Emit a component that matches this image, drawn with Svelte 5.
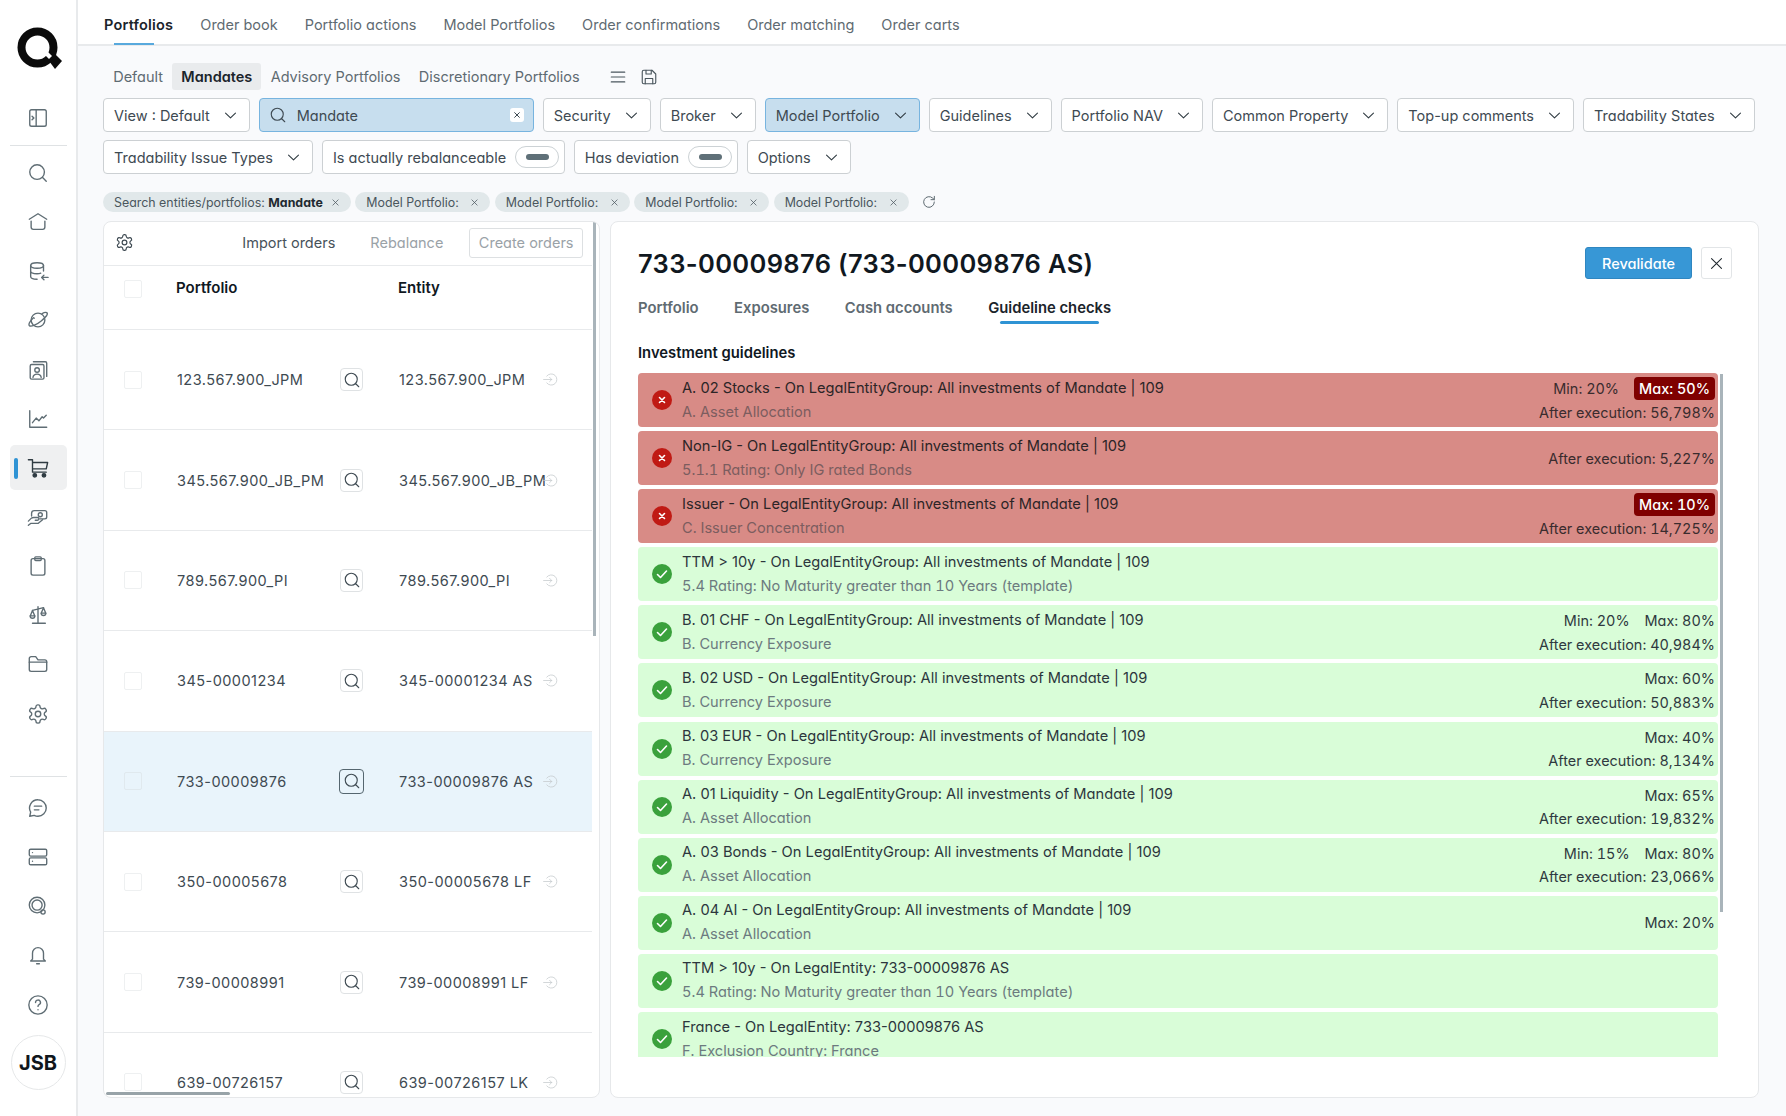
<script>
const I = {
  panel: '<rect x="3" y="3" width="18" height="18" rx="2"/><path d="M10 3v18M5.5 10l2 2-2 2"/>',
  search: '<circle cx="11" cy="11" r="8"/><path d="M17 17l4 4"/>',
  home: '<path d="M2.5 9L12 3l9.5 6"/><path d="M4.5 11v6.5a2.5 2.5 0 0 0 2.5 2.5h10a2.5 2.5 0 0 0 2.5-2.5V11"/>',
  db: '<ellipse cx="11" cy="6" rx="7" ry="3"/><path d="M4 6v12c0 1.7 3 3 7 3M18 6v6M4 12c0 1.7 3 3 7 3 1.5 0 3-.2 4-.6M23 19h-7M18.500 16.500L16 19l2.500 2.500"/>',
  planet: '<circle cx="12" cy="12" r="7.500"/><path d="M7 9.500C3.500 13 1.500 16.500 2.500 18c1.500 2 7.500-.5 13-5S23.500 5.500 21.500 4c-1-.7-3-.2-5 1"/><path d="M8 10h.01"/>',
  contacts: '<rect x="3.500" y="6" width="15" height="16" rx="1.500"/><path d="M7 3h13a1.500 1.500 0 0 1 1.500 1.500V19"/><circle cx="11" cy="12" r="2.500"/><path d="M6.500 20c.5-2.500 2.300-3.500 4.500-3.500s4 1 4.500 3.500"/>',
  chart: '<path d="M3 3v18h18.500M6 16l4-5 3 3 3.500-4.500 1.500 1.500 3-3"/>',
  cart: '<path d="M1.500 3h4.500v13.500h15M6 6h16.500l-1.500 7H6"/><circle cx="8.500" cy="20" r="1.900" fill="currentColor"/><circle cx="18.500" cy="20" r="1.900" fill="currentColor"/>',
  hand: '<path d="M5 11V8a3 3 0 0 1 3-3h11.500a2 2 0 0 1 2 2v5a2 2 0 0 1-2 2H14"/><circle cx="14.500" cy="9.500" r="2.200"/><path d="M1.500 16.500l3-3c1-1 2-1 3-1h4a1.300 1.300 0 0 1 0 3H9M1.500 21l2.500-2h8l5-4"/>',
  clip: '<rect x="4.500" y="4" width="15" height="18" rx="2"/><rect x="8.500" y="2" width="7" height="4" rx="1"/>',
  scale: '<path d="M12 3v18M6 21h14M6 7l12-3"/><path d="M6 7l-2.500 6h5zM18 4l-2.500 6h5z"/><path d="M3.500 13a2.500 2.500 0 0 0 5 0M15.500 10a2.500 2.500 0 0 0 5 0"/>',
  folder: '<path d="M2.500 6a2 2 0 0 1 2-2h5l2.500 3.500h7.500a2 2 0 0 1 2 2V18a2 2 0 0 1-2 2h-15a2 2 0 0 1-2-2z"/><path d="M2.500 10h19"/>',
  gear: '<path d="M12.220 2h-.44a2 2 0 0 0-2 2v.18a2 2 0 0 1-1 1.730l-.43.25a2 2 0 0 1-2 0l-.15-.08a2 2 0 0 0-2.730.73l-.22.38a2 2 0 0 0 .73 2.730l.15.1a2 2 0 0 1 1 1.720v.51a2 2 0 0 1-1 1.740l-.15.09a2 2 0 0 0-.73 2.730l.22.38a2 2 0 0 0 2.730.73l.15-.08a2 2 0 0 1 2 0l.43.25a2 2 0 0 1 1 1.730V20a2 2 0 0 0 2 2h.44a2 2 0 0 0 2-2v-.18a2 2 0 0 1 1-1.730l.43-.25a2 2 0 0 1 2 0l.15.08a2 2 0 0 0 2.730-.73l.22-.39a2 2 0 0 0-.73-2.730l-.15-.08a2 2 0 0 1-1-1.740v-.5a2 2 0 0 1 1-1.740l.15-.09a2 2 0 0 0 .73-2.730l-.22-.38a2 2 0 0 0-2.730-.73l-.15.08a2 2 0 0 1-2 0l-.43-.25a2 2 0 0 1-1-1.730V4a2 2 0 0 0-2-2z"/><circle cx="12" cy="12" r="3"/>',
  chat: '<path d="M12 3a9 9 0 0 1 0 18c-1.500 0-3-.4-4.200-1L3 21l1-4.500A9 9 0 0 1 12 3z"/><path d="M8 10h8M8 14h5"/>',
  server: '<rect x="2.500" y="3.500" width="19" height="7.500" rx="1.500"/><rect x="2.500" y="13" width="19" height="7.500" rx="1.500"/><path d="M6 7.200h.01M6 16.700h.01"/>',
  target: '<circle cx="11" cy="11" r="8.500"/><circle cx="11" cy="11" r="5.500"/><circle cx="17.500" cy="18.500" r="2.300"/>',
  bell: '<path d="M6 16.500V10a6 6 0 0 1 12 0v6.500l2 2H4z"/><path d="M10.500 21.500h3"/>',
  help: '<circle cx="12" cy="12" r="10"/><path d="M9.300 9.300a2.700 2.700 0 1 1 3.900 2.400c-.8.4-1.200.9-1.200 1.800M12 17.200h.01"/>',
  menu: '<path d="M3 5.500h18M3 12h18M3 18.500h18"/>',
  save: '<path d="M5 3h11l5 5v11a2 2 0 0 1-2 2H5a2 2 0 0 1-2-2V5a2 2 0 0 1 2-2z"/><path d="M8 3v5h7V3M7 21v-7h10v7"/>',
  chev: '<path d="M5 8.500l7 7 7-7"/>',
  x: '<path d="M5 5l14 14M19 5L5 19"/>',
  refresh: '<path d="M20 12a8 8 0 1 1-2.500-5.800L20 8.500M20 3.500v5h-5"/>',
  enter: '<path d="M1 12h13M10.500 8.500L14 12l-3.500 3.500"/><path d="M6 6.500a9 9 0 1 1 0 11"/>'
};

const navTop = [
  { i: 'search' }, { i: 'home' }, { i: 'db' }, { i: 'planet' }, { i: 'contacts' }, { i: 'chart' },
  { i: 'cart', active: true }, { i: 'hand' }, { i: 'clip' }, { i: 'scale' }, { i: 'folder' }, { i: 'gear' }
];
const navBottom = ['chat', 'server', 'target', 'bell', 'help'];
const tabs = ['Portfolios', 'Order book', 'Portfolio actions', 'Model Portfolios', 'Order confirmations', 'Order matching', 'Order carts'];
const views = ['Default', 'Mandates', 'Advisory Portfolios', 'Discretionary Portfolios'];
const row1After = ['Security', 'Broker', 'Model Portfolio', 'Guidelines', 'Portfolio NAV', 'Common Property', 'Top-up comments', 'Tradability States'];
const chips = ['Model Portfolio: ', 'Model Portfolio: ', 'Model Portfolio: ', 'Model Portfolio: '];
const table = [
  ['123.567.900_JPM', '123.567.900_JPM'],
  ['345.567.900_JB_PM', '345.567.900_JB_PM'],
  ['789.567.900_PI', '789.567.900_PI'],
  ['345-00001234', '345-00001234 AS'],
  ['733-00009876', '733-00009876 AS'],
  ['350-00005678', '350-00005678 LF'],
  ['739-00008991', '739-00008991 LF'],
  ['639-00726157', '639-00726157 LK']
];
const detailTabs = ['Portfolio', 'Exposures', 'Cash accounts', 'Guideline checks'];
const G = 'On LegalEntityGroup: All investments of Mandate | 109';
const AA = 'A. Asset Allocation';
const CE = 'B. Currency Exposure';
const TPL = '5.4 Rating: No Maturity greater than 10 Years (template)';
const checks = [
  { bad: true, t: 'A. 02 Stocks - ' + G, s: AA, min: '20%', max: '50%', hot: true, after: '56,798%' },
  { bad: true, t: 'Non-IG - ' + G, s: '5.1.1 Rating: Only IG rated Bonds', after: '5,227%' },
  { bad: true, t: 'Issuer - ' + G, s: 'C. Issuer Concentration', max: '10%', hot: true, after: '14,725%' },
  { t: 'TTM > 10y - ' + G, s: TPL },
  { t: 'B. 01 CHF - ' + G, s: CE, min: '20%', max: '80%', after: '40,984%' },
  { t: 'B. 02 USD - ' + G, s: CE, max: '60%', after: '50,883%' },
  { t: 'B. 03 EUR - ' + G, s: CE, max: '40%', after: '8,134%' },
  { t: 'A. 01 Liquidity - ' + G, s: AA, max: '65%', after: '19,832%' },
  { t: 'A. 03 Bonds - ' + G, s: AA, min: '15%', max: '80%', after: '23,066%' },
  { t: 'A. 04 AI - ' + G, s: AA, max: '20%' },
  { t: 'TTM > 10y - On LegalEntity: 733-00009876 AS', s: TPL },
  { t: 'France - On LegalEntity: 733-00009876 AS', s: 'F. Exclusion Country: France' }
];
</script>

{#snippet icon(name, cls)}
  <svg class="ic {cls}" viewBox="0 0 24 24" aria-hidden="true">{@html I[name]}</svg>
{/snippet}

{#snippet drop(label, on)}
  <button class="filter" class:on>{label}{@render icon('chev', 'chev')}</button>
{/snippet}

<div class="app">
  <aside class="side">
    <svg class="logo" viewBox="0 0 46 44" aria-label="logo">
      <circle cx="21.500" cy="20.500" r="16" fill="none" stroke="#0b0b0b" stroke-width="8"/>
      <path d="M30 30l6-6 10 10-7 8z" fill="#0b0b0b"/>
      <path d="M27 26l3-3 6 6-3 3z" fill="#fff"/>
    </svg>
    <div class="nav-item first">{@render icon('panel', 'nav')}</div>
    <hr class="rule top" />
    <nav class="group">
      {#each navTop as n}
        <div class="nav-item" class:active={n.active}>
          {#if n.active}<span class="mark"></span>{/if}
          {@render icon(n.i, 'nav')}
        </div>
      {/each}
    </nav>
    <hr class="rule bottom" />
    <nav class="group">
      {#each navBottom as n}
        <div class="nav-item">{@render icon(n, 'nav')}</div>
      {/each}
    </nav>
    <div class="avatar">JSB</div>
  </aside>

  <main class="main">
    <header class="topbar">
      {#each tabs as t, i}
        <span class="toptab" class:sel={i === 0}>{t}</span>
      {/each}
    </header>

    <div class="content">
      <div class="views">
        {#each views as v, i}
          <span class="view" class:sel={i === 1}>{v}</span>
        {/each}
        {@render icon('menu', 'tool first-tool')}
        {@render icon('save', 'tool')}
      </div>

      <div class="filters">
        {@render drop('View : Default')}
        <div class="searchbox">
          {@render icon('search', 'sb')}
          <span class="sb-text">Mandate</span>
          <span class="sb-x">{@render icon('x', 'tiny')}</span>
        </div>
        {#each row1After as f}
          {@render drop(f, f === 'Model Portfolio')}
        {/each}
      </div>

      <div class="filters second">
        {@render drop('Tradability Issue Types')}
        <div class="filter">Is actually rebalanceable<span class="toggle"><i></i></span></div>
        <div class="filter">Has deviation<span class="toggle"><i></i></span></div>
        {@render drop('Options')}
      </div>

      <div class="chips">
        <span class="chip">Search entities/portfolios: <b>Mandate</b>{@render icon('x', 'chipx')}</span>
        {#each chips as c}
          <span class="chip">{c}{@render icon('x', 'chipx')}</span>
        {/each}
        {@render icon('refresh', 'refresh')}
      </div>

      <div class="panels">
        <section class="panel left">
          <div class="toolbar">
            {@render icon('gear', 'tgear')}
            <span class="tb-link imp">Import orders</span>
            <span class="tb-link dis">Rebalance</span>
            <span class="tb-btn">Create orders</span>
          </div>
          <div class="thead trow">
            <span class="cb"></span>
            <b>Portfolio</b>
            <span></span>
            <b>Entity</b>
          </div>
          <div class="tbody">
            {#each table as r, i}
              <div class="trow row" class:selrow={i === 4}>
                <span class="cb"></span>
                <span>{r[0]}</span>
                <span class="mag" class:magon={i === 4}>{@render icon('search', 'magic')}</span>
                <span class="ent">{r[1]}</span>
                {@render icon('enter', 'enter')}
              </div>
            {/each}
          </div>
          <span class="vbar"></span>
          <span class="hbar"></span>
        </section>

        <section class="panel right">
          <div class="dhead">
            <h1>733-00009876 (733-00009876 AS)</h1>
            <button class="reval">Revalidate</button>
            <span class="closeb">{@render icon('x', 'closex')}</span>
          </div>
          <div class="dtabs">
            {#each detailTabs as t, i}
              <span class="dtab" class:sel={i === 3}>{t}</span>
            {/each}
          </div>
          <h2>Investment guidelines</h2>
          <div class="checks">
            {#each checks as c}
              <div class="check" class:bad={c.bad}>
                <span class="st">
                  <svg viewBox="0 0 20 20" aria-hidden="true">
                    {#if c.bad}
                      <path d="M7.500 7.500l5 5M12.500 7.500l-5 5" />
                    {:else}
                      <path d="M5.500 10.500l3 3 6-6.500" />
                    {/if}
                  </svg>
                </span>
                <div class="ctext">
                  <div class="ct">{c.t}</div>
                  <div class="cs">{c.s}</div>
                </div>
                <div class="cnums">
                  {#if c.min || c.max}
                    <div class="limits">
                      {#if c.min}<span>Min: {c.min}</span>{/if}
                      {#if c.max}<span class:hot={c.hot}>Max: {c.max}</span>{/if}
                    </div>
                  {/if}
                  {#if c.after}<div>After execution: {c.after}</div>{/if}
                </div>
              </div>
            {/each}
          </div>
          <span class="cbar"></span>
        </section>
      </div>
    </div>
  </main>
</div>

<style>
  :global(body) { margin: 0; background: #f9fafc; }
  .app {
    display: grid; grid-template-columns: 78px 1fr; height: 1116px; width: 1786px; overflow: hidden;
    font-family: Inter, "Liberation Sans", sans-serif; font-feature-settings: "cv11"; font-size: 14.5px; color: #3e4a52;
  }
  .ic { fill: none; stroke: currentColor; stroke-width: 1.5; stroke-linecap: round; stroke-linejoin: round; display: block; flex: none; }

  .side { background: #fff; border-right: 2px solid #e8eaec; display: flex; flex-direction: column; align-items: center; box-sizing: border-box; padding-top: 27px; position: relative; }
  .logo { width: 46px; height: 44px; margin-left: 1px; }
  .nav-item { width: 57px; height: 49.200px; display: flex; align-items: center; justify-content: center; color: #5f6d74; position: relative; border-radius: 5px; flex: none; }
  .nav-item.first { margin-top: 22px; }
  .nav-item.active { background: #eff0f1; color: #2f3b42; height: 45px; margin: 2px 0; }
  .mark { position: absolute; left: 4px; top: 13px; width: 4px; height: 21px; border-radius: 2px; background: #2f93d4; }
  .nav { width: 22px; height: 22px; }
  .rule { width: 57px; height: 1px; background: #dfe2e4; border: 0; margin: 0; flex: none; }
  .rule.top { margin-top: 3px; margin-bottom: 2px; }
  .rule.bottom { margin-top: 37.500px; margin-bottom: 6.500px; }
  .group { display: flex; flex-direction: column; flex: none; }
  .avatar { width: 53px; height: 53px; border-radius: 50%; border: 1.500px solid #e6e8e9; display: flex; align-items: center; justify-content: center; font-weight: 700; font-size: 20px; color: #10161c; margin-top: 6px; flex: none; }

  .main { min-width: 0; display: flex; flex-direction: column; }
  .topbar { height: 46px; box-sizing: border-box; background: #fff; border-bottom: 2px solid #e8eaec; display: flex; gap: 27px; padding: 14.500px 0 0 26px; color: #5f6b72; flex: none; }
  .toptab { position: relative; line-height: 20px; height: 20px; }
  .toptab.sel { font-weight: 600; color: #1b242b; letter-spacing: .2px; }
  .toptab.sel::after { content: ""; position: absolute; left: 10px; width: 40px; bottom: -10.500px; height: 2px; background: #58a9dd; }

  .content { padding: 17px 27px 0 25px; }
  .views { display: flex; align-items: center; height: 27px; color: #5f6b72; padding-left: 1px; }
  .view { padding: 0 9.200px; line-height: 27px; }
  .view.sel { background: #e9ebed; border-radius: 3px; font-weight: 600; color: #1b242b; }
  .tool { width: 18px; height: 18px; color: #4a565d; margin-left: 13px; }
  .first-tool { margin-left: 20px; }

  .filters { display: flex; gap: 9px; margin-top: 8px; }
  .filters.second { margin-top: 8px; }
  .filter {
    height: 34px; box-sizing: border-box; display: flex; align-items: center; gap: 12px; padding: 0 10px;
    background: #fff; border: 1px solid #ccd0d3; border-radius: 4px; font: inherit; color: inherit; font-feature-settings: inherit; white-space: nowrap;
  }
  .filter.on { background: #c7deee; border-color: #77b4df; }
  .chev { width: 17px; height: 17px; color: #2f3a41; }
  .searchbox { width: 275px; height: 34px; box-sizing: border-box; background: #c7deee; border: 1px solid #77b4df; border-radius: 4px; display: flex; align-items: center; padding: 0 9px; flex: none; }
  .sb { width: 18px; height: 18px; }
  .sb-text { margin-left: 10px; flex: 1; }
  .sb-x { width: 14px; height: 14px; background: #fff; border-radius: 3px; display: flex; align-items: center; justify-content: center; }
  .tiny { width: 8px; height: 8px; stroke-width: 3; }
  .toggle { width: 44px; height: 22px; box-sizing: border-box; border: 1.500px solid #ccd2d5; border-radius: 11px; display: flex; align-items: center; justify-content: center; margin-left: -3px; margin-right: -5.500px; }
  .toggle i { width: 23px; height: 6px; border-radius: 3px; background: #5f7078; }

  .chips { display: flex; align-items: center; gap: 4.500px; margin-top: 18px; height: 20px; }
  .chip { height: 20px; box-sizing: border-box; display: flex; align-items: center; padding: 0 11px; background: #e1e8ea; border-radius: 10px; font-size: 12.400px; color: #4a565d; white-space: pre; }
  .chip b { font-weight: 700; color: #1f2a31; }
  .chipx { width: 9px; height: 9px; margin-left: 8px; stroke-width: 2; }
  .refresh { width: 16px; height: 16px; margin-left: 8px; color: #5f6b72; }

  .panels { display: grid; grid-template-columns: 497px 1149px; gap: 10px; margin-top: 9px; height: 877px; }
  .panel { background: #fff; border: 1px solid #e6e8ea; border-radius: 8px; box-sizing: border-box; position: relative; overflow: hidden; }

  .left { display: flex; flex-direction: column; }
  .toolbar { height: 44px; flex: none; box-sizing: border-box; width: 488px; border-bottom: 1px solid #e8eaec; display: flex; align-items: center; padding: 0 9px 2px 11px; }
  .tgear { width: 19px; height: 19px; color: #3e4a52; }
  .imp { margin-left: auto; color: #47525a; }
  .dis { margin-left: 35px; color: #9aa2a7; }
  .tb-btn { margin-left: 26px; height: 30px; box-sizing: border-box; padding: 0 8.500px; border: 1px solid #dde0e2; border-radius: 3px; line-height: 28px; color: #9aa2a7; }
  .trow { display: grid; width: 488px; box-sizing: border-box; padding-left: 20px; grid-template-columns: 53px 163px 59px 144px 20px; }
  .thead { height: 64px; flex: none; border-bottom: 1px solid #e8eaec; padding-top: 11px; align-items: start; font-size: 15px; }
  .thead b { font-weight: 600; color: #10181f; line-height: 22px; margin-left: -1px; }
  .thead .cb { margin-top: 3px; }
  .cb { width: 18px; height: 18px; box-sizing: border-box; border: 1px solid #eef0f1; border-radius: 2px; display: block; }
  .tbody { height: 826px; overflow: hidden; }
  .row { height: 100.400px; align-items: center; border-bottom: 1px solid #e8eaec; white-space: nowrap; letter-spacing: .46px; }
  .selrow { background: #e9f4fb; }
  .selrow .cb { border-color: #e0e9ee; }
  .mag { width: 23px; height: 23px; box-sizing: border-box; border: 1px solid #dfe2e4; border-radius: 4px; display: flex; align-items: center; justify-content: center; color: #3e4a52; background: #fff; }
  .magon { border: 1.500px solid #55666f; background: #e9f4fb; width: 25px; height: 25px; margin-left: -1px; }
  .magic { width: 18px; height: 18px; }
  .enter { width: 15px; height: 15px; color: #c4c9cc; stroke-width: 1.200; }
  .vbar { position: absolute; right: 3px; top: 0; width: 3px; height: 414px; background: #a9b4ba; }
  .hbar { position: absolute; left: 2px; bottom: 2px; width: 124px; height: 3px; background: #98a3a8; border-radius: 2px; }

  .right { padding: 0 0 0 27px; }
  .dhead { display: flex; align-items: center; height: 32px; margin-top: 25px; padding-right: 26px; }
  h1 { margin: 0; font-size: 25.500px; font-weight: 600; color: #10181f; flex: 1; letter-spacing: .35px; }
  .reval { width: 107px; height: 32px; background: #3797d6; border: 1px solid #2f86c0; border-radius: 3px; color: #fff; font: inherit; font-feature-settings: inherit; font-weight: 500; }
  .closeb { width: 31px; height: 32px; box-sizing: border-box; border: 1px solid #e2e5e7; border-radius: 3px; margin-left: 9px; display: flex; align-items: center; justify-content: center; color: #20292f; }
  .closex { width: 17px; height: 17px; }
  .dtabs { display: flex; gap: 35.500px; margin-top: 18px; height: 22px; line-height: 22px; font-weight: 600; font-size: 14.800px; color: #5f6b72; }
  .dtab { position: relative; }
  .dtab.sel { color: #1b242b; }
  .dtab.sel::after { content: ""; position: absolute; left: 12px; right: 12px; bottom: -5px; height: 3px; background: #2f93d4; border-radius: 2px; }
  h2 { margin: 23px 0 0; font-size: 14.800px; line-height: 22px; font-weight: 600; color: #10181f; }
  .checks { height: 684px; width: 1080px; overflow: hidden; display: flex; flex-direction: column; gap: 4.100px; margin-top: 9px; font-size: 14.670px; }
  .check { height: 54px; flex: none; box-sizing: border-box; background: #d9fdd8; border-radius: 4px; display: flex; align-items: center; padding: 0 3px 0 14px; }
  .check.bad { background: #d88b86; }
  .st { width: 20px; height: 20px; border-radius: 50%; background: #3aa13c; flex: none; }
  .bad .st { background: #c01a14; }
  .st svg { display: block; fill: none; stroke: #fff; stroke-width: 1.600; stroke-linecap: round; stroke-linejoin: round; }
  .ctext { margin-left: 10px; flex: 1; line-height: 24px; padding-bottom: 1px; }
  .ct { color: #2c363d; }
  .cs { color: #6c7a7f; font-feature-settings: "cv11", "tnum"; font-size: 14.600px; }
  .bad .ct { color: #2c2527; }
  .bad .cs { color: #7c5d5f; }
  .cnums { text-align: right; line-height: 23px; color: #2f393f; font-size: 14.450px; font-feature-settings: "cv11", "tnum"; }
  .bad .cnums { color: #3a2c2e; }
  .limits { display: flex; justify-content: flex-end; gap: 15px; align-items: center; height: 24px; }
  .hot { background: #7f0000; color: #fff; border-radius: 4px; padding: 0 5px; height: 23px; line-height: 23px; font-weight: 500; }
  .cbar { position: absolute; left: 1109px; top: 152px; width: 3px; height: 538px; background: #a9b4ba; }
</style>
